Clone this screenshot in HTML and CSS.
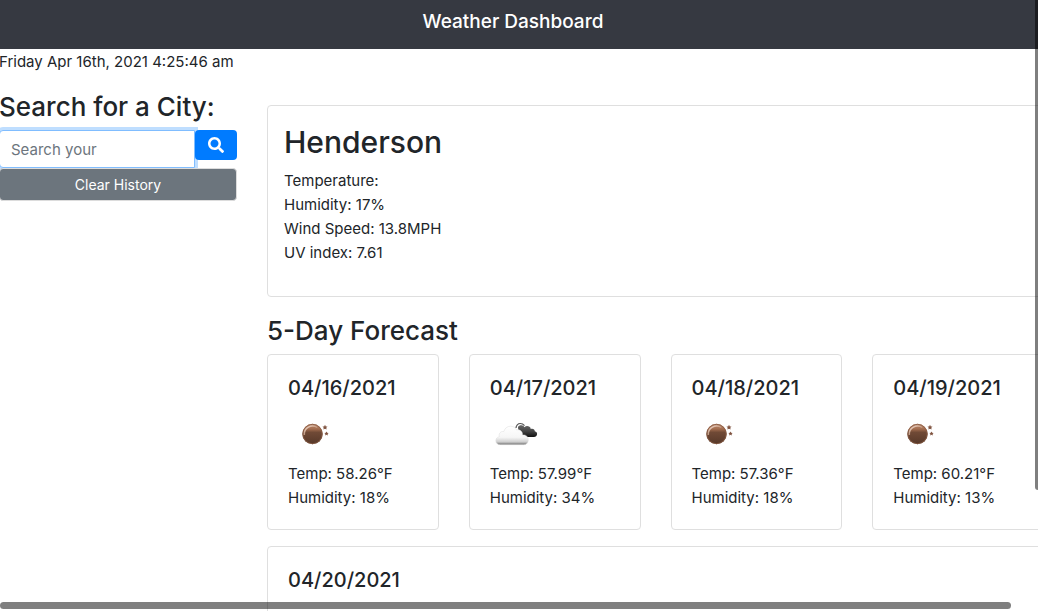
FILE: index.html
```
<!DOCTYPE html>
<html lang="en">
<head>
<meta charset="utf-8">
<title>Weather Dashboard</title>
<link rel="stylesheet" href="styles.css">
</head>
<body>
<svg class="defs" width="0" height="0" aria-hidden="true">
  <defs>
    <linearGradient id="moon-fill" x1="0" y1="0" x2="0" y2="1">
      <stop offset="0" stop-color="#b8896f"/><stop offset=".25" stop-color="#a56e50"/><stop offset=".42" stop-color="#704a36"/><stop offset="1" stop-color="#563829"/>
    </linearGradient>
    <linearGradient id="moon-rim" x1="0" y1="0" x2="1" y2="1">
      <stop offset="0" stop-color="#f8e6dc"/><stop offset=".5" stop-color="#d0a890" stop-opacity=".8"/><stop offset="1" stop-color="#b98a70" stop-opacity=".3"/>
    </linearGradient>
    <linearGradient id="cloud-fill" x1="0" y1="0" x2="0" y2="1">
      <stop offset="0" stop-color="#fff"/><stop offset=".6" stop-color="#f6f6f6"/><stop offset=".85" stop-color="#cfcfcf"/><stop offset="1" stop-color="#6f6f6f"/>
    </linearGradient>
    <linearGradient id="dark-fill" x1="0" y1="0" x2="0" y2="1">
      <stop offset="0" stop-color="#666"/><stop offset=".5" stop-color="#444"/><stop offset="1" stop-color="#111"/>
    </linearGradient>
    <symbol id="moon" viewBox="0 0 50 50">
      <circle cx="24.500" cy="23" r="10.200" fill="url(#moon-fill)"/>
      <circle cx="24.500" cy="23" r="9.700" fill="none" stroke="#8a5d45" stroke-width=".8"/>
      <path d="M16.300 24a8.300 8.300 0 0 1 13-7.500" fill="none" stroke="url(#moon-rim)" stroke-width="1.500"/>
      <path d="m37 13.800.8 1.600 1.700.2-1.200 1.200.3 1.800-1.600-.9-1.600.9.300-1.800-1.200-1.200 1.700-.2zM38.500 20.500l.7 1.300 1.400.1-1 1 .3 1.500-1.400-.7-1.400.7.3-1.500-1-1 1.400-.1z" fill="#805441"/>
    </symbol>
    <symbol id="clouds" viewBox="0 0 50 50">
      <path d="M26 17c0-2.500 2-4.500 4.200-4.500 2 0 3.400 1 4.300 2.200" fill="none" stroke="#555" stroke-width="1.200"/>
      <path d="M28 16c1-2 4.800-2.500 6.500.2 1.700-2 5.700-1.300 6.300 1.700 2.300-.8 4 .6 4 2.300 1.600.3 2.400 1.500 2.300 2.900-.1 1.800-1.500 2.900-3.200 2.900H35c-3.500-2-7-5-7-10z" fill="url(#dark-fill)"/>
      <path d="M10.200 33.700C7.500 33.700 5.800 32 5.800 29.700c0-2.200 1.500-3.800 3.500-4-.8-3.300 1.400-5.700 4.500-5.200.8-3 3.300-5.300 6.800-5.300 3 0 5 1.600 6 3.800 3-.9 6.300 1.400 5.900 5 3.300-.6 5.800 1.700 5.800 4.900 0 3-2 4.800-4.500 4.800z" fill="url(#cloud-fill)" stroke="#ddd" stroke-width=".5"/>
    </symbol>
  </defs>
</svg>

<header class="navbar"><h1 class="brand">Weather Dashboard</h1></header>
<main class="page">
  <p class="clock">Friday Apr 16th, 2021 4:25:46 am</p>
  <div class="layout">
    <aside class="sidebar">
      <form class="search">
        <label class="heading" for="city">Search for a City:</label>
        <div class="search-row">
          <input class="search-input" id="city" type="text" placeholder="Search your">
          <button class="search-button" type="button" aria-label="Search">
            <svg width="16" height="16" viewBox="0 0 512 512" aria-hidden="true"><path fill="currentColor" d="M505 442.700 405.300 343c-4.500-4.500-10.600-7-17-7H372c27.600-35.300 44-79.700 44-128C416 93.100 322.900 0 208 0S0 93.100 0 208s93.100 208 208 208c48.300 0 92.700-16.400 128-44v16.300c0 6.400 2.500 12.500 7 17l99.700 99.700c9.400 9.400 24.600 9.400 33.900 0l28.300-28.300c9.400-9.400 9.400-24.600.1-34zM208 336c-70.700 0-128-57.200-128-128 0-70.700 57.200-128 128-128 70.700 0 128 57.200 128 128 0 70.700-57.200 128-128 128z"/></svg>
          </button>
        </div>
        <button class="clear-button" type="button">Clear History</button>
      </form>
    </aside>
    <div class="content">
      <section class="current">
        <h2 class="city">Henderson</h2>
        <p>Temperature:</p>
        <p>Humidity: 17%</p>
        <p>Wind Speed: 13.8MPH</p>
        <p>UV index: 7.61</p>
      </section>
      <h2 class="heading">5-Day Forecast</h2>
      <section class="forecast">
        <article class="day"><h3 class="date">04/16/2021</h3><svg class="icon"><use href="#moon"/></svg><p>Temp: 58.26°F</p><p>Humidity: 18%</p></article>
        <article class="day"><h3 class="date">04/17/2021</h3><svg class="icon"><use href="#clouds"/></svg><p>Temp: 57.99°F</p><p>Humidity: 34%</p></article>
        <article class="day"><h3 class="date">04/18/2021</h3><svg class="icon"><use href="#moon"/></svg><p>Temp: 57.36°F</p><p>Humidity: 18%</p></article>
        <article class="day"><h3 class="date">04/19/2021</h3><svg class="icon"><use href="#moon"/></svg><p>Temp: 60.21°F</p><p>Humidity: 13%</p></article>
        <article class="day last"><h3 class="date">04/20/2021</h3></article>
      </section>
    </div>
  </div>
</main>
<div class="scroll-thumb vertical"></div>
<div class="scroll-thumb horizontal"></div>
</body>
</html>
```
FILE: styles.css
```
* { box-sizing: border-box; }
html { height: 100%; overflow: hidden; }
body {
  margin: 0;
  height: 100%;
  overflow: hidden;
  background: #fff;
  color: #212529;
  font-family: Inter, "Liberation Sans", sans-serif;
  font-size: 15px;
  line-height: 24px;
}
h1, h2, h3, p { margin: 0; }
.defs { position: absolute; }
.navbar {
  padding: 7px 12px 12px 0;
  background: #363941;
  color: #fff;
  text-align: center;
}
.brand { font-size: 19px; font-weight: 500; line-height: 30px; }
.page { margin: 0 -6px 0 -1px; padding-top: 1px; }
.layout {
  display: grid;
  grid-template-columns: 238px minmax(0, 1fr);
  gap: 30px;
  padding-top: 16px;
}
.heading {
  display: block;
  font-size: 26px;
  font-weight: 500;
  line-height: 34px;
}
.search { display: flex; flex-direction: column; }
.search-row { display: flex; align-items: flex-start; padding-top: 6px; }
.search-input {
  flex: 1;
  min-width: 0;
  height: 38px;
  padding: 6px 11px;
  border: 1px solid #80bdff;
  border-radius: 4px 0 0 4px;
  box-shadow: 0 0 0 3px rgba(0, 123, 255, .25);
  background: #fff;
  color: #495057;
  font: inherit;
  outline: 0;
}
.search-input::placeholder { color: #6c757d; opacity: 1; }
.search-button {
  position: relative;
  display: flex;
  align-items: center;
  justify-content: center;
  width: 42px;
  height: 30px;
  padding: 0;
  border: 0;
  border-radius: 4px;
  background: #007bff;
  color: #fff;
}
.clear-button {
  height: 33px;
  padding: 0;
  border: 1px solid #dcdcdc;
  border-radius: 4px;
  background: #6c757d;
  color: #fff;
  font: inherit;
  font-size: 14px;
}
.current {
  margin: 15px 0 17px;
  padding: 17px 16px 31px;
  border: 1px solid #dfdfdf;
  border-radius: 4px;
}
.city {
  margin-bottom: 8px;
  font-size: 30px;
  font-weight: 500;
  line-height: 38px;
}
.forecast {
  display: grid;
  grid-template-columns: repeat(4, 1fr);
  gap: 16px 30px;
  padding-top: 6px;
}
.day {
  padding: 21px 20px 19px;
  border: 1px solid #dfdfdf;
  border-radius: 4px;
  white-space: nowrap;
}
.last { grid-column: 1 / -1; }
.date {
  margin-bottom: 11px;
  font-size: 20px;
  font-weight: 500;
  line-height: 24px;
}
.icon { display: block; width: 50px; height: 50px; margin-bottom: 1px; }
.scroll-thumb { position: fixed; background: rgba(0, 0, 0, .5); }
.vertical { top: 0; right: 0; width: 3px; height: 80.2%; border-radius: 0 0 0 3px; }
.horizontal { left: 0; bottom: 2px; width: 97.4%; height: 7px; border-radius: 4px; }
```
